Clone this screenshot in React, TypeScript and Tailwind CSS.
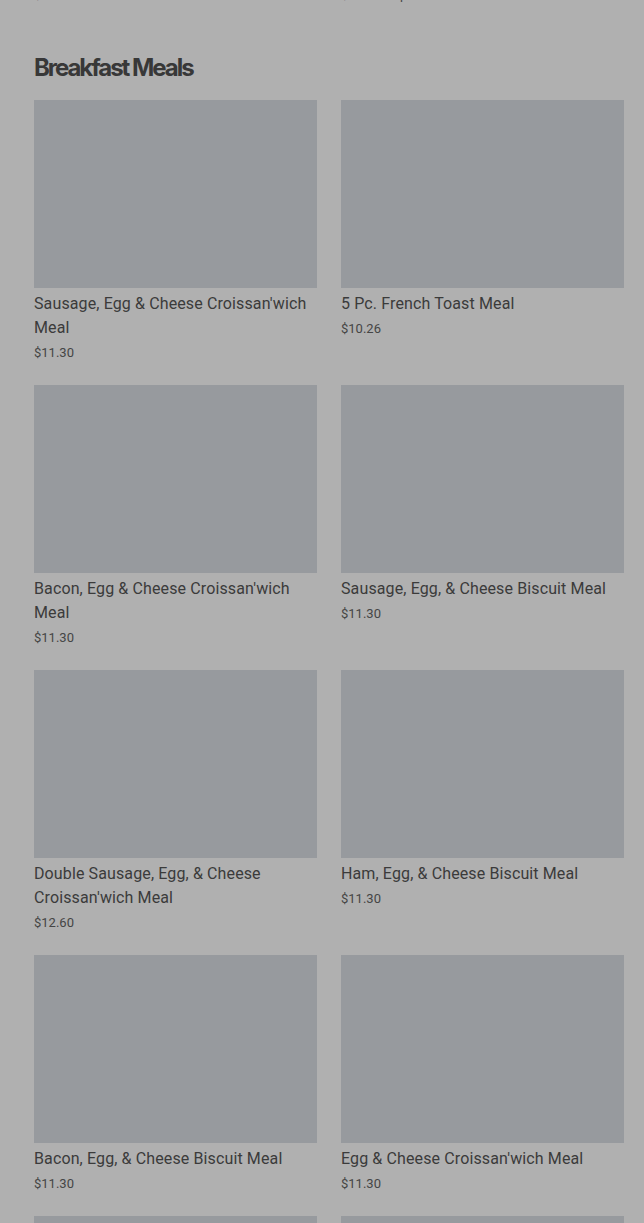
const items = [
  { name: "Sausage, Egg & Cheese Croissan'wich Meal", price: "$11.30" },
  { name: "5 Pc. French Toast Meal", price: "$10.26" },
  { name: "Bacon, Egg & Cheese Croissan'wich Meal", price: "$11.30" },
  { name: "Sausage, Egg, & Cheese Biscuit Meal", price: "$11.30" },
  { name: "Double Sausage, Egg, & Cheese Croissan'wich Meal", price: "$12.60" },
  { name: "Ham, Egg, & Cheese Biscuit Meal", price: "$11.30" },
  { name: "Bacon, Egg, & Cheese Biscuit Meal", price: "$11.30" },
  { name: "Egg & Cheese Croissan'wich Meal", price: "$11.30" },
  { name: "Egg & Cheese Biscuit Meal", price: "$9.90" },
  { name: "Sausage Biscuit Meal", price: "$9.40" },
];

function MenuItem({ name, price }: { name: string; price: string }) {
  return (
    <div className="flex flex-col">
      <div className="h-[188px] w-full bg-[#979a9e]" />
      <p className="pt-[4px] text-base leading-6 tracking-[0.12px] text-[#3b3b3b]">{name}</p>
      <p className="pt-[1px] text-[13px] leading-6 text-[#454545]">{price}</p>
    </div>
  );
}

export default function App() {
  return (
    <div
      className="min-h-screen overflow-hidden bg-[#b0b0b0] pl-[34px] pr-[20px]"
      style={{ fontFamily: "Roboto, 'Liberation Sans', sans-serif" }}
    >
      {/* tail of the previous section, scrolled mostly out of view */}
      <div className="-mt-[17px] grid grid-cols-2 gap-x-6 text-[13px] leading-6 text-[#454545]">
        <p>$4.99</p>
        <p>$5.49 • Popular Item</p>
      </div>

      <h2
        className="mt-[45px] text-2xl leading-8 font-bold tracking-[-0.085em] text-[#383838]"
        style={{ fontFamily: "Inter, Roboto, sans-serif" }}
      >
        Breakfast Meals
      </h2>

      <div className="mt-[16px] grid grid-cols-2 gap-x-6 gap-y-[20px]">
        {items.map((item) => (
          <MenuItem key={item.name} name={item.name} price={item.price} />
        ))}
      </div>
    </div>
  );
}
